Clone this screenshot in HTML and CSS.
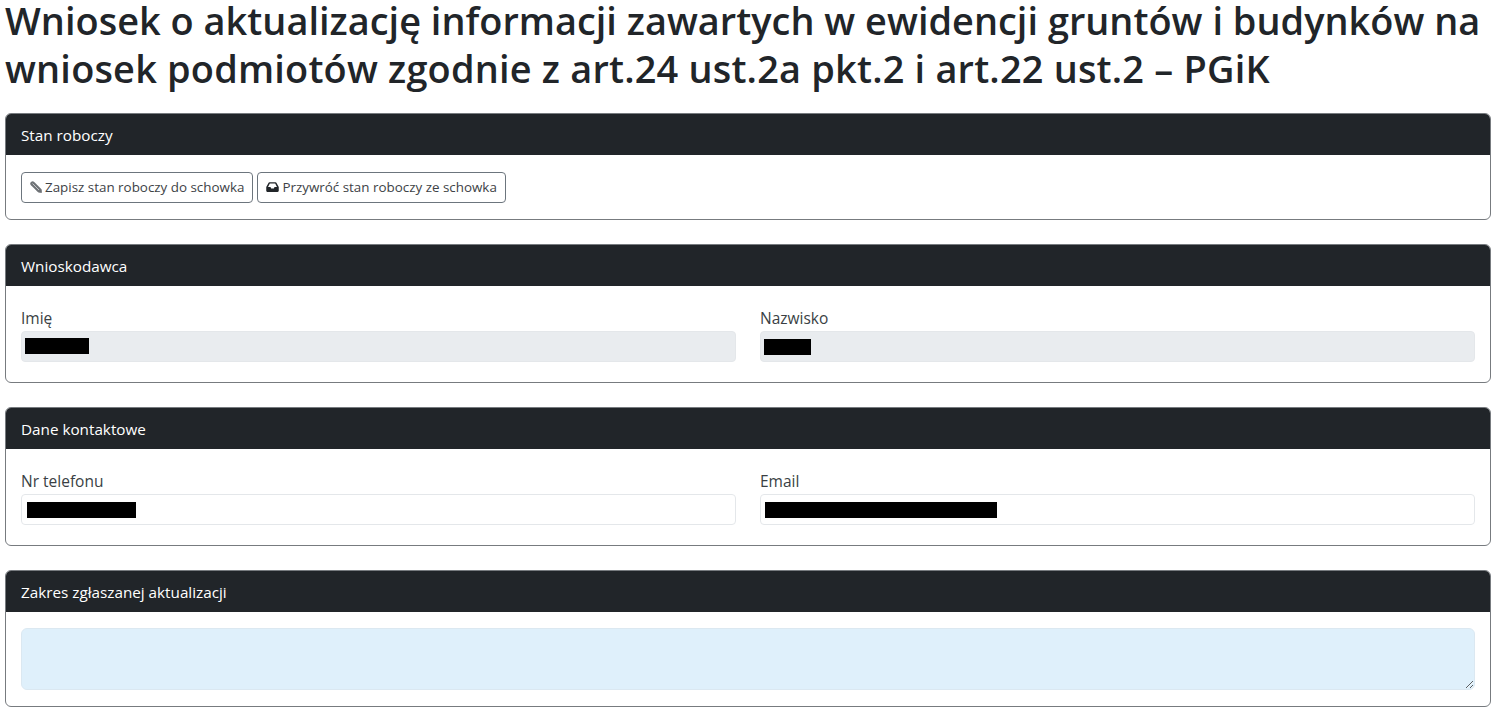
FILE: index.html
```html
<!DOCTYPE html>
<html lang="pl">
<head>
<meta charset="utf-8">
<title>Wniosek</title>
<link rel="stylesheet" href="styles.css">
</head>
<body>
<main class="page">
  <h1 class="title">Wniosek o aktualizację informacji zawartych w ewidencji gruntów i budynków na <span class="title-rest">wniosek podmiotów zgodnie z art.24 ust.2a pkt.2 i art.22 ust.2 – PGiK</span></h1>

  <section class="card card-draft">
    <header class="card-header">Stan roboczy</header>
    <div class="card-body draft-body">
      <div class="buttons">
        <button class="btn" type="button">
          <svg class="icon" viewBox="0 0 16 16" aria-hidden="true"><path d="M3.500 3.500 12.500 12.500" stroke="#6f7377" stroke-width="6.200" stroke-linecap="round" fill="none"/><path d="M13 13l2.500 2.500" stroke="#6f7377" stroke-width="2.400" fill="none"/><path d="M3.400 3.400l8.600 8.600" stroke="#fff" stroke-width=".8" fill="none"/></svg>
          Zapisz stan roboczy do schowka
        </button>
        <button class="btn" type="button">
          <svg class="icon icon-inbox" viewBox="0 0 16 12" aria-hidden="true"><path d="M4.300 0h7.400c.5 0 .9.300 1.100.7L15.700 6v4.500c0 .8-.6 1.500-1.400 1.500H1.700C.9 12 .3 11.300.3 10.500V6L3.200.7C3.400.3 3.800 0 4.300 0Zm.4 1.700L2.500 6h3l.9 1.800h3.200l.9-1.800h3l-2.200-4.300H4.700Z" fill="#212529" fill-rule="evenodd"/></svg>
          Przywróć stan roboczy ze schowka
        </button>
      </div>
    </div>
  </section>

  <section class="card">
    <header class="card-header">Wnioskodawca</header>
    <div class="card-body fields">
      <div class="field">
        <label class="label">Imię</label>
        <div class="control control-readonly"><span class="redact redact-first"></span></div>
      </div>
      <div class="field">
        <label class="label">Nazwisko</label>
        <div class="control control-readonly"><span class="redact redact-last"></span></div>
      </div>
    </div>
  </section>

  <section class="card">
    <header class="card-header">Dane kontaktowe</header>
    <div class="card-body fields">
      <div class="field">
        <label class="label">Nr telefonu</label>
        <div class="control"><span class="redact redact-phone"></span></div>
      </div>
      <div class="field">
        <label class="label">Email</label>
        <div class="control"><span class="redact redact-mail"></span></div>
      </div>
    </div>
  </section>

  <section class="card">
    <header class="card-header">Zakres zgłaszanej aktualizacji</header>
    <div class="card-body">
      <textarea class="area" aria-label="Zakres zgłaszanej aktualizacji"></textarea>
    </div>
  </section>
</main>
</body>
</html>
```

FILE: styles.css
```css
* { box-sizing: border-box; }
html, body { margin: 0; padding: 0; background: #fff; overflow: hidden; }
body {
  height: 709px;
  font-family: "Open Sans", "Noto Sans", sans-serif;
  color: #212529;
}
.page { padding: 0 5px; display: flex; flex-direction: column; gap: 24.4px; margin-top: -4px; }
.title {
  margin: 0;
  height: 92.6px;
  font-size: 37.9px;
  line-height: 48px;
  font-weight: 600;
  letter-spacing: .02px;
  color: #212529;
}
.title-rest { letter-spacing: .2px; }
.card {
  border: 1px solid #777b7f;
  border-radius: 6px;
  overflow: hidden;
  background: #fff;
}
.card-header {
  height: 41px;
  padding: 1px 0 0 15px;
  background: #212529;
  color: #fff;
  font-size: 15.25px;
  line-height: 40px;
}
.card-body { padding: 16px 15px; }
.draft-body { padding-top: 17px; }
.buttons { display: flex; gap: 4px; }
.btn {
  height: 31px;
  padding: 0 8px;
  display: flex;
  align-items: center;
  gap: 3px;
  background: #fff;
  border: 1px solid #6c757d;
  border-radius: 4px;
  font-family: inherit;
  font-size: 13.4px;
  color: #3d4246;
  white-space: nowrap;
}
.icon { width: 12px; height: 12px; flex: none; }
.icon-inbox { width: 13px; height: 10px; }
.fields { display: grid; grid-template-columns: 1fr 1fr; column-gap: 24px; padding-top: 19.5px; padding-bottom: 19.9px; }
.label { display: block; font-size: 15.5px; line-height: 25px; color: #3a3f44; }
.control {
  height: 31px;
  border: 1px solid #e4e7ea;
  border-radius: 4px;
  background: #fff;
  display: flex;
  align-items: center;
}
.control-readonly { background: #e9ecef; }
.redact { display: block; height: 16px; background: #000; }
.redact-first { width: 64px; margin-left: 3px; }
.redact-last { width: 47px; margin-left: 3px; margin-top: 2px; }
.redact-phone { width: 109px; margin-left: 5px; margin-top: 1px; }
.redact-mail { width: 232px; margin-left: 4px; margin-top: 1px; }
.area {
  display: block;
  width: 100%;
  height: 62px;
  border: 1px solid #dbe8f1;
  border-radius: 6px;
  background: #dff0fb;
  resize: vertical;
  outline: none;
  margin: 0;
}
```
